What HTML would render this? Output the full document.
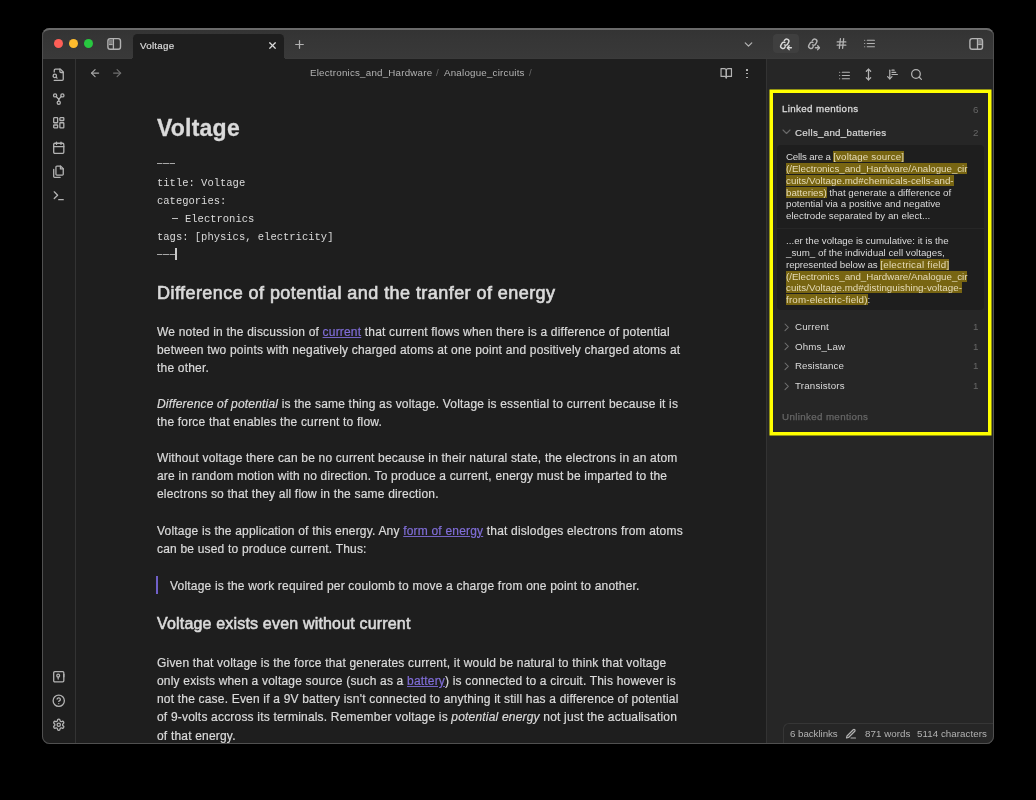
<!DOCTYPE html>
<html><head><meta charset="utf-8">
<style>
*{box-sizing:border-box;margin:0;padding:0}
html,body{width:1036px;height:800px;background:#000;overflow:hidden}
body{font-family:"Liberation Sans",sans-serif;color:#dadada;position:relative;-webkit-font-smoothing:antialiased}
.win{position:absolute;left:42px;top:28px;width:952px;height:716px;border-radius:7.5px;overflow:hidden;background:#1e1e1e}
.winborder{position:absolute;left:42px;top:28px;width:952px;height:716px;border-radius:7.5px;border:1px solid #505050;border-top:2px solid #6a6a6a;pointer-events:none}
.abs{position:absolute}
svg.i{position:absolute;overflow:visible;fill:none;stroke:#b3b3b3;stroke-width:2.3;stroke-linecap:round;stroke-linejoin:round}
.titlebar{position:absolute;left:0;top:0;width:952px;height:31px;background:linear-gradient(to bottom,#333 0,#363636 40%,#393939 100%);border-bottom:1px solid #3b3b3b}
.dot{position:absolute;width:9.5px;height:9.5px;border-radius:50%}
.ribbon{position:absolute;left:0;top:31px;width:34px;height:685px;background:#1e1e1e;border-right:1px solid #333}
.rside{position:absolute;left:724px;top:31px;width:228px;height:685px;background:#262626;border-left:1px solid #333}
.txt{position:absolute;white-space:pre;line-height:18px;will-change:transform}
.body{font-size:12px;color:#dadada;letter-spacing:0.19px;-webkit-text-stroke:0.2px #dadada}
.mono{font-family:"Liberation Mono",monospace;font-size:10.5px;color:#dadada}
a{color:#806ed8;text-decoration:underline;text-decoration-color:#7464c4;text-decoration-thickness:1px;text-underline-offset:1px;-webkit-text-stroke-color:#806ed8}
.ui{font-size:9.75px;line-height:12px;position:absolute;white-space:pre;will-change:transform}
.hl{background:linear-gradient(to bottom,transparent 0.4px,rgba(255,208,0,0.4) 0.4px,rgba(255,208,0,0.4) calc(100% - 0.4px),transparent calc(100% - 0.4px));color:#e6dcb8}
</style></head>
<body>
<div class="win">
  <div class="titlebar"></div>
  <div class="ribbon"></div>
  <div class="rside"></div>
</div>

<!-- traffic lights -->
<div class="dot" style="left:53.55px;top:38.85px;background:#fe5f57"></div>
<div class="dot" style="left:68.65px;top:38.85px;background:#febc2e"></div>
<div class="dot" style="left:83.65px;top:38.85px;background:#28c840"></div>

<!-- tab -->
<div class="abs" style="left:133px;top:34px;width:151px;height:25px;background:#1e1e1e;border-radius:4.5px 4.5px 0 0"></div>
<div class="abs" style="left:130px;top:56px;width:3px;height:3px;background:radial-gradient(circle at 0 0,transparent 3px,#1e1e1e 3px)"></div>
<div class="abs" style="left:284px;top:56px;width:3px;height:3px;background:radial-gradient(circle at 100% 0,transparent 3px,#1e1e1e 3px)"></div>
<div class="ui" style="left:140.3px;top:39.7px;color:#dadada;letter-spacing:0.27px;-webkit-text-stroke:0.2px #dadada">Voltage</div>

<!-- content -->
<div class="txt" style="left:156.8px;top:113px;font-size:23px;font-weight:bold;line-height:30px;letter-spacing:0.22px;-webkit-text-stroke:0.3px #dadada">Voltage</div>
<div class="abs" style="left:156.6px;top:163.3px;width:18.8px;height:1.2px;background:repeating-linear-gradient(to right,#a8a8a8 0,#a8a8a8 5.4px,#555 5.4px,#555 6.27px)"></div>
<div class="txt mono" style="left:156.9px;top:173.6px">title: Voltage
categories:</div>
<div class="abs" style="left:172.1px;top:217.6px;width:6.1px;height:1.3px;background:#bdbdbd"></div>
<div class="txt mono" style="left:185.1px;top:209.6px">Electronics</div>
<div class="txt mono" style="left:156.9px;top:227.6px">tags: [physics, electricity]</div>
<div class="abs" style="left:156.6px;top:254px;width:18.8px;height:1.3px;background:repeating-linear-gradient(to right,#a8a8a8 0,#a8a8a8 5.4px,#555 5.4px,#555 6.27px)"></div>
<div class="txt" style="left:157px;top:280.4px;font-size:18px;line-height:26px;letter-spacing:0.44px;-webkit-text-stroke:0.65px #dadada">Difference of potential and the tranfer of energy</div>
<div class="txt body" style="left:156.6px;top:322.5px">We noted in the discussion of <a>current</a> that current flows when there is a difference of potential
between two points with negatively charged atoms at one point and positively charged atoms at
the other.</div>
<div class="txt body" style="left:156.6px;top:394.7px"><i>Difference of potential</i> is the same thing as voltage. Voltage is essential to current because it is
the force that enables the current to flow.</div>
<div class="txt body" style="left:156.6px;top:449px">Without voltage there can be no current because in their natural state, the electrons in an atom
are in random motion with no direction. To produce a current, energy must be imparted to the
electrons so that they all flow in the same direction.</div>
<div class="txt body" style="left:156.6px;top:522px">Voltage is the application of this energy. Any <a>form of energy</a> that dislodges electrons from atoms
can be used to produce current. Thus:</div>
<div class="abs" style="left:156px;top:576px;width:2px;height:18px;background:#7060c8"></div>
<div class="txt body" style="left:169.6px;top:577px">Voltage is the work required per coulomb to move a charge from one point to another.</div>
<div class="txt" style="left:157px;top:613px;font-size:16px;line-height:22px;letter-spacing:0.18px;-webkit-text-stroke:0.6px #dadada">Voltage exists even without current</div>
<div class="txt body" style="left:156.6px;top:653.5px;line-height:18.15px">Given that voltage is the force that generates current, it would be natural to think that voltage
only exists when a voltage source (such as a <a>battery</a>) is connected to a circuit. This however is
not the case. Even if a 9V battery isn't connected to anything it still has a difference of potential
of 9-volts accross its terminals. Remember voltage is <i>potential energy</i> not just the actualisation
of that energy.</div>

<!-- breadcrumb -->
<div class="ui" style="left:310.3px;top:67px;color:#b3b3b3;letter-spacing:0.22px">Electronics_and_Hardware</div>
<div class="ui" style="left:436px;top:67px;color:#666">/</div>
<div class="ui" style="left:443.8px;top:67px;color:#b3b3b3;letter-spacing:0.22px">Analogue_circuits</div>
<div class="ui" style="left:528.5px;top:67px;color:#666">/</div>

<!-- SIDEBAR -->
<div class="ui" style="left:782px;top:103px;color:#dadada;letter-spacing:0.36px;-webkit-text-stroke:0.28px #dadada">Linked mentions</div>
<div class="ui" style="left:973px;top:103.5px;color:#666">6</div>
<div class="ui" style="left:794.7px;top:127px;color:#dadada;letter-spacing:0.27px;-webkit-text-stroke:0.18px #dadada">Cells_and_batteries</div>
<div class="ui" style="left:973px;top:127px;color:#666">2</div>
<div class="abs" style="left:777px;top:145px;width:207px;height:83px;background:#1e1e1e;border-radius:4px 4px 0 0"></div>
<div class="abs" style="left:777px;top:229px;width:207px;height:81px;background:#1e1e1e;border-radius:0 0 4px 4px"></div>
<div class="ui" style="left:786px;top:150.6px;line-height:11.85px;color:#dadada"><span style="letter-spacing:-0.17px">Cells are a </span><span class="hl" style="letter-spacing:0.12px">[voltage source]</span>
<span class="hl" style="letter-spacing:-0.03px">(/Electronics_and_Hardware/Analogue_cir</span>
<span class="hl" style="letter-spacing:0.05px">cuits/Voltage.md#chemicals-cells-and-</span>
<span class="hl">batteries)</span> that generate a difference of
potential via a positive and negative
electrode separated by an elect...</div>
<div class="ui" style="left:785.5px;top:235px;line-height:11.85px;color:#dadada">...er the voltage is cumulative: it is the
_sum_ of the individual cell voltages,
<span style="letter-spacing:-0.08px">represented below as </span><span class="hl" style="letter-spacing:0.26px">[electrical field]</span>
<span class="hl" style="letter-spacing:-0.03px">(/Electronics_and_Hardware/Analogue_cir</span>
<span class="hl" style="letter-spacing:0.05px">cuits/Voltage.md#distinguishing-voltage-</span>
<span class="hl" style="letter-spacing:0.18px">from-electric-field)</span>:</div>
<div class="ui" style="left:795px;top:321px;color:#dadada;letter-spacing:0.2px">Current</div>
<div class="ui" style="left:973px;top:321px;color:#666">1</div>
<div class="ui" style="left:795px;top:340.7px;color:#dadada;letter-spacing:0.12px">Ohms_Law</div>
<div class="ui" style="left:973px;top:340.7px;color:#666">1</div>
<div class="ui" style="left:795px;top:360.4px;color:#dadada;letter-spacing:0.08px">Resistance</div>
<div class="ui" style="left:973px;top:360.4px;color:#666">1</div>
<div class="ui" style="left:795px;top:380px;color:#dadada;letter-spacing:0.18px">Transistors</div>
<div class="ui" style="left:973px;top:380px;color:#666">1</div>
<div class="ui" style="left:782px;top:410.8px;color:#666;letter-spacing:0.36px;-webkit-text-stroke:0.25px #666">Unlinked mentions</div>
<svg class="abs" style="left:769px;top:89px" width="223" height="347"><rect x="2.25" y="2.25" width="218.5" height="342.5" fill="none" stroke="#ffff00" stroke-width="3.5"/></svg>

<!-- STATUS -->
<div class="abs" style="left:783px;top:723px;width:211px;height:21px;background:#262626;border-top:1px solid #363636;border-left:1px solid #363636;border-radius:6px 0 7.5px 0"></div>
<div class="ui" style="left:789.6px;top:727.5px;color:#b3b3b3;letter-spacing:-0.05px">6 backlinks</div>
<svg class="i" style="left:845px;top:727.5px;stroke:#b3b3b3" width="12" height="12" viewBox="0 0 24 24"><path d="M12 20h9"/><path d="M16.5 3.5a2.121 2.121 0 0 1 3 3L7 19l-4 1 1-4L16.5 3.5z"/></svg>
<div class="ui" style="left:864.7px;top:727.5px;color:#b3b3b3;letter-spacing:0.04px">871 words</div>
<div class="ui" style="left:917px;top:727.5px;color:#b3b3b3;letter-spacing:0.05px">5114 characters</div>

<!-- ICONS -->
<!-- ribbon top -->
<svg class="i" style="left:52px;top:68.3px" width="13.5" height="13.5" viewBox="0 0 24 24"><path d="M4 22h14a2 2 0 0 0 2-2V7l-5-5H6a2 2 0 0 0-2 2v3"/><path d="M14 2v4a2 2 0 0 0 2 2h4"/><circle cx="5" cy="14" r="3"/><path d="m9 18-1.5-1.5"/></svg>
<svg class="i" style="left:52px;top:92.3px" width="13.5" height="13.5" viewBox="0 0 24 24"><circle cx="12" cy="19" r="2.8"/><circle cx="5.5" cy="6" r="2.8"/><circle cx="18.5" cy="6" r="2.8"/><path d="M7.5 8l4.5 5 4.5-5"/><path d="M12 13v3.2"/></svg>
<svg class="i" style="left:52px;top:116.3px" width="13.5" height="13.5" viewBox="0 0 24 24"><rect x="3" y="3" width="7" height="9" rx="1"/><rect x="14" y="3" width="7" height="5" rx="1"/><rect x="14" y="12" width="7" height="9" rx="1"/><rect x="3" y="16" width="7" height="5" rx="1"/></svg>
<svg class="i" style="left:52px;top:141.3px" width="13.5" height="13.5" viewBox="0 0 24 24"><rect x="3" y="4" width="18" height="18" rx="2"/><path d="M16 2v4"/><path d="M8 2v4"/><path d="M3 10h18"/></svg>
<svg class="i" style="left:52px;top:165.3px" width="13.5" height="13.5" viewBox="0 0 24 24"><path d="M15.5 2H8.6c-.4 0-.8.2-1.1.5-.3.3-.5.7-.5 1.1v12.8c0 .4.2.8.5 1.1.3.3.7.5 1.1.5h9.8c.4 0 .8-.2 1.1-.5.3-.3.5-.7.5-1.1V6.5L15.5 2z"/><path d="M3 7.6v12.8c0 .4.2.8.5 1.1.3.3.7.5 1.1.5h9.8"/><path d="M15 2v5h5"/></svg>
<svg class="i" style="left:52px;top:189.3px" width="13.5" height="13.5" viewBox="0 0 24 24"><polyline points="4 17 10 11 4 5"/><line x1="12" y1="19" x2="20" y2="19"/></svg>
<!-- ribbon bottom -->
<svg class="i" style="left:52px;top:670.3px" width="13.5" height="13.5" viewBox="0 0 24 24"><rect x="3" y="3" width="18" height="18" rx="2"/><circle cx="11" cy="10" r="2.5"/><path d="M11 12.5V16"/><path d="M21 8v4"/></svg>
<svg class="i" style="left:52px;top:694.3px" width="13.5" height="13.5" viewBox="0 0 24 24"><circle cx="12" cy="12" r="10"/><path d="M9.09 9a3 3 0 0 1 5.83 1c0 2-3 3-3 3"/><path d="M12 17h.01"/></svg>
<svg class="i" style="left:52px;top:718.3px" width="13.5" height="13.5" viewBox="0 0 24 24"><path d="M12.22 2h-.44a2 2 0 0 0-2 2v.18a2 2 0 0 1-1 1.73l-.43.25a2 2 0 0 1-2 0l-.15-.08a2 2 0 0 0-2.73.73l-.22.38a2 2 0 0 0 .73 2.73l.15.1a2 2 0 0 1 1 1.72v.51a2 2 0 0 1-1 1.74l-.15.09a2 2 0 0 0-.73 2.73l.22.38a2 2 0 0 0 2.73.73l.15-.08a2 2 0 0 1 2 0l.43.25a2 2 0 0 1 1 1.73V20a2 2 0 0 0 2 2h.44a2 2 0 0 0 2-2v-.18a2 2 0 0 1 1-1.73l.43-.25a2 2 0 0 1 2 0l.15.08a2 2 0 0 0 2.73-.73l.22-.39a2 2 0 0 0-.73-2.73l-.15-.08a2 2 0 0 1-1-1.74v-.5a2 2 0 0 1 1-1.74l.15-.09a2 2 0 0 0 .73-2.73l-.22-.38a2 2 0 0 0-2.73-.73l-.15.08a2 2 0 0 1-2 0l-.43-.25a2 2 0 0 1-1-1.73V4a2 2 0 0 0-2-2z"/><circle cx="12" cy="12" r="3"/></svg>
<!-- titlebar -->
<svg class="abs" style="left:100px;top:30px" width="30" height="26" viewBox="0 0 30 26"><rect x="109" y="9.5" width="3.6" height="5" fill="#7a7a7a" transform="translate(-100,0)"/><rect x="7.9" y="8.6" width="12.6" height="10.6" rx="2.3" fill="none" stroke="#b3b3b3" stroke-width="1.4"/><path d="M13.4 8.6v10.6" stroke="#b3b3b3" stroke-width="1.3"/><path d="M9 14.6h3.6" stroke="#c0c0c0" stroke-width="0.9"/></svg>
<svg class="i" style="left:267px;top:39.5px;stroke:#dadada;stroke-width:2.6" width="11" height="11" viewBox="0 0 24 24"><path d="M18 6 6 18"/><path d="m6 6 12 12"/></svg>
<svg class="i" style="left:292.5px;top:37.5px" width="13" height="13" viewBox="0 0 24 24"><path d="M12 5v14"/><path d="M5 12h14"/></svg>
<svg class="i" style="left:741.5px;top:37.5px" width="13" height="13" viewBox="0 0 24 24"><path d="m6 9 6 6 6-6"/></svg>
<div class="abs" style="left:773px;top:34px;width:25.5px;height:18.8px;background:#3f3f3f;border-radius:4px"></div>
<svg class="i" style="left:778.5px;top:36.5px;stroke:#dadada;stroke-width:2.5" width="13.5" height="13.5" viewBox="0 0 24 24"><g transform="rotate(-15 10 11)"><path d="M9 14a4 4 0 0 0 5.66 0l2.5-2.5a4 4 0 0 0-5.66-5.66l-1 1"/><path d="M11 10a4 4 0 0 0-5.66 0l-2.5 2.5a4 4 0 0 0 5.66 5.66l1-1"/></g><path d="M22 19h-7"/><path d="m18 15.5-3 3.5 3 3.5"/></svg>
<svg class="i" style="left:806.5px;top:36.5px;stroke-width:2.5" width="13.5" height="13.5" viewBox="0 0 24 24"><g transform="rotate(-15 10 11)"><path d="M9 14a4 4 0 0 0 5.66 0l2.5-2.5a4 4 0 0 0-5.66-5.66l-1 1"/><path d="M11 10a4 4 0 0 0-5.66 0l-2.5 2.5a4 4 0 0 0 5.66 5.66l1-1"/></g><path d="M15 19h7"/><path d="m19 15.5 3 3.5-3 3.5"/></svg>
<svg class="i" style="left:835px;top:37px" width="13" height="13" viewBox="0 0 24 24"><path d="M4 9h16"/><path d="M4 15h16"/><path d="M10 3 8 21"/><path d="M16 3l-2 18"/></svg>
<svg class="i" style="left:863px;top:37px" width="13" height="13" viewBox="0 0 24 24"><path d="M8 6h13"/><path d="M8 12h13"/><path d="M8 18h13"/><path d="M3 6h.01"/><path d="M3 12h.01"/><path d="M3 18h.01"/></svg>
<svg class="abs" style="left:962px;top:30px" width="30" height="26" viewBox="0 0 30 26"><rect x="16.2" y="9.5" width="3.6" height="5" fill="#7a7a7a"/><rect x="7.9" y="8.6" width="12.6" height="10.6" rx="2.3" fill="none" stroke="#b3b3b3" stroke-width="1.4"/><path d="M15.5 8.6v10.6" stroke="#b3b3b3" stroke-width="1.3"/><path d="M16.2 14.6h3.6" stroke="#c0c0c0" stroke-width="0.9"/></svg>
<!-- nav -->
<svg class="i" style="left:89px;top:67.4px;stroke:#a8a8a8" width="12.2" height="12.2" viewBox="0 0 24 24"><path d="m12 19-7-7 7-7"/><path d="M19 12H5"/></svg>
<svg class="i" style="left:110.5px;top:67.4px;stroke:#707070" width="12.2" height="12.2" viewBox="0 0 24 24"><path d="M5 12h14"/><path d="m12 5 7 7-7 7"/></svg>
<svg class="i" style="left:720.2px;top:66.8px" width="12.5" height="12.5" viewBox="0 0 24 24"><path d="M2 3h6a4 4 0 0 1 4 4v14a3 3 0 0 0-3-3H2z"/><path d="M22 3h-6a4 4 0 0 0-4 4v14a3 3 0 0 1 3-3h7z"/></svg>
<div class="abs" style="left:746.1px;top:69px;width:1.7px;height:1.7px;background:#b8b8b8;border-radius:0.3px"></div><div class="abs" style="left:746.1px;top:72.8px;width:1.7px;height:1.7px;background:#b8b8b8;border-radius:0.3px"></div><div class="abs" style="left:746.1px;top:76.6px;width:1.7px;height:1.7px;background:#b8b8b8;border-radius:0.3px"></div>
<!-- right sidebar header -->
<svg class="i" style="left:837.5px;top:68.5px" width="13" height="13" viewBox="0 0 24 24"><path d="M8 6h13"/><path d="M8 12h13"/><path d="M8 18h13"/><path d="M3 6h.01"/><path d="M3 12h.01"/><path d="M3 18h.01"/></svg>
<svg class="i" style="left:861.5px;top:68.3px" width="13" height="13" viewBox="0 0 24 24"><path d="M12 2v20"/><path d="m8 18 4 4 4-4"/><path d="m8 6 4-4 4 4"/></svg>
<svg class="i" style="left:885.5px;top:68.3px" width="13" height="13" viewBox="0 0 24 24"><path d="m3 16 4 4 4-4"/><path d="M7 20V4"/><path d="M11 4h4"/><path d="M11 8h7"/><path d="M11 12h10"/></svg>
<svg class="i" style="left:910px;top:68.3px" width="13" height="13" viewBox="0 0 24 24"><circle cx="11" cy="11" r="8"/><path d="m21 21-4.3-4.3"/></svg>
<!-- tree chevrons -->
<svg class="abs" style="left:782px;top:129px" width="9" height="6" viewBox="0 0 9 6"><path d="M1 1l3.5 3.5L8 1" fill="none" stroke="#6a6a6a" stroke-width="1.1" stroke-linecap="round" stroke-linejoin="round"/></svg>
<svg class="abs" style="left:783.5px;top:322.5px" width="6" height="9" viewBox="0 0 6 9"><path d="M1 1l3.3 3.3L1 7.6" fill="none" stroke="#707070" stroke-width="1.05" stroke-linecap="round" stroke-linejoin="round"/></svg>
<svg class="abs" style="left:783.5px;top:342.2px" width="6" height="9" viewBox="0 0 6 9"><path d="M1 1l3.3 3.3L1 7.6" fill="none" stroke="#707070" stroke-width="1.05" stroke-linecap="round" stroke-linejoin="round"/></svg>
<svg class="abs" style="left:783.5px;top:361.9px" width="6" height="9" viewBox="0 0 6 9"><path d="M1 1l3.3 3.3L1 7.6" fill="none" stroke="#707070" stroke-width="1.05" stroke-linecap="round" stroke-linejoin="round"/></svg>
<svg class="abs" style="left:783.5px;top:381.5px" width="6" height="9" viewBox="0 0 6 9"><path d="M1 1l3.3 3.3L1 7.6" fill="none" stroke="#707070" stroke-width="1.05" stroke-linecap="round" stroke-linejoin="round"/></svg>
<!-- cursor -->
<div class="abs" style="left:175.2px;top:248px;width:1.4px;height:12px;background:#c8c8c8"></div>

<div class="winborder"></div>
</body></html>
